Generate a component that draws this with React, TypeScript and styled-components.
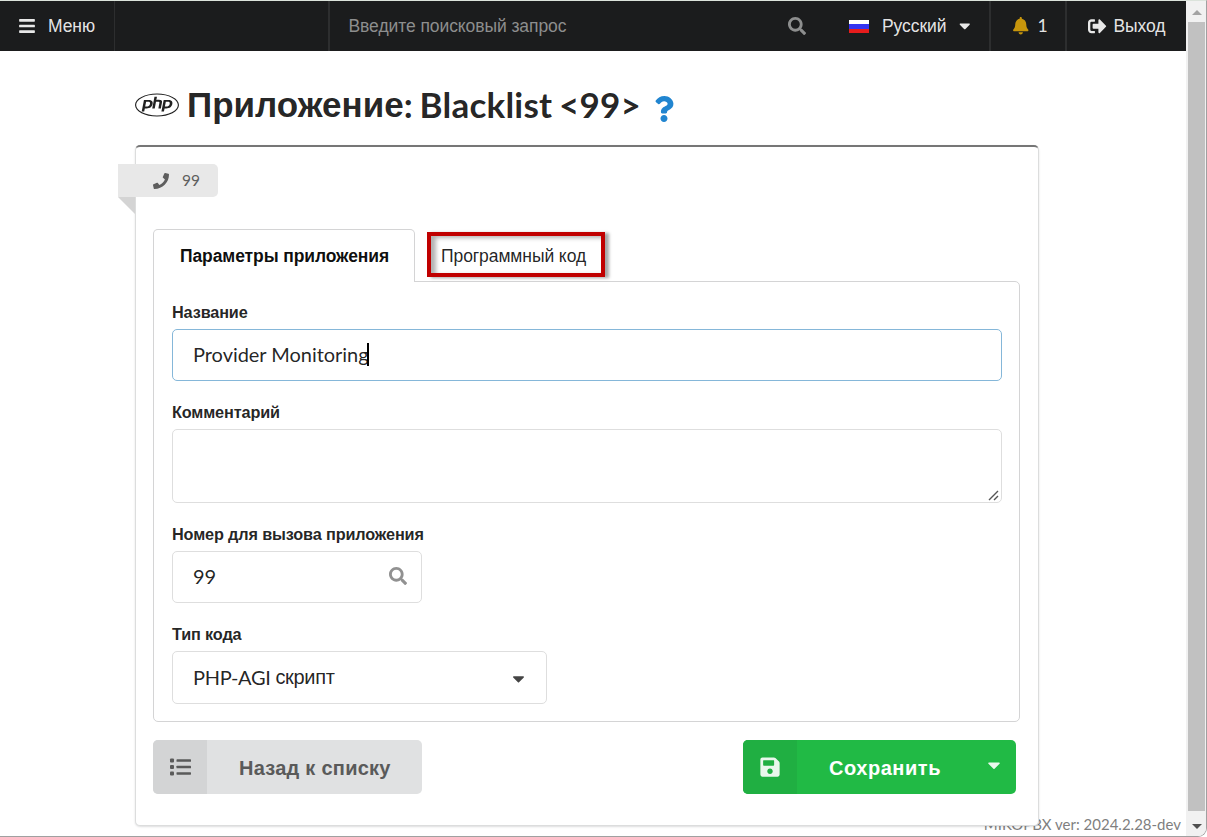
import React from 'react';
import styled, { createGlobalStyle } from 'styled-components';
import {
  FaBars, FaSearch, FaCaretDown, FaBell, FaSignOutAlt, FaPhp, FaQuestion, FaPhone, FaSave,
} from 'react-icons/fa';

const LATO = 'Lato, "Liberation Sans", sans-serif';
const ARIAL = '"Liberation Sans", Arial, sans-serif';

const GlobalStyle = createGlobalStyle`
  *, *::before, *::after { box-sizing: border-box; }
  body { margin: 0; background: #fff; overflow: hidden; }
  button, input, textarea { font: inherit; }
`;

const Window = styled.div`
  display: flex;
  width: 1207px;
  height: 837px;
  border: 1px solid #a0a0a0;
  border-top-color: #dbe3db;
  border-left: 0;
  border-radius: 0 0 9px 0;
  overflow: hidden;
  background: #fff;
  color: rgba(0, 0, 0, 0.87);
  font-family: ${ARIAL};
  font-size: 17.5px;
  line-height: 24px;
`;

const Page = styled.div`
  position: relative;
  display: flex;
  flex-direction: column;
  width: 1186px;
  flex: none;
`;

const Lat = styled.span<{ $spacing?: number }>`
  font-family: ${LATO};
  letter-spacing: ${(p) => p.$spacing ?? 0}px;
`;

const Cyr = styled.span<{ $spacing?: number }>`
  font-family: ${ARIAL};
  letter-spacing: ${(p) => p.$spacing ?? 0}px;
`;

const TopBar = styled.header`
  display: flex;
  height: 50px;
  flex: none;
  background: #1b1c1d;
  color: rgba(255, 255, 255, 0.9);
  letter-spacing: -0.08px;
`;

const BarItem = styled.div<{ $w: number; $pad: number; $gap?: number; $line?: number }>`
  display: flex;
  align-items: center;
  width: ${(p) => p.$w}px;
  padding-left: ${(p) => p.$pad}px;
  gap: ${(p) => p.$gap ?? 0}px;
  border-right: ${(p) => p.$line ?? 0}px solid #2d2e2f;
  white-space: nowrap;
  svg { flex: none; }
`;

const LanguageItem = styled(BarItem)`
  > svg { margin-left: 10px; }
`;

const SearchBox = styled(BarItem)`
  justify-content: space-between;
  padding-right: 23px;
  color: #8d8e8e;
`;

const Flag = styled.span`
  width: 20px;
  height: 13px;
  margin-right: 13px;
  background: linear-gradient(#fff 0 4px, #3434f0 4px 9px, #e61c1c 9px);
`;

const Content = styled.main`
  display: flex;
  flex-direction: column;
  width: 904px;
  margin-left: 135px;
`;

const Title = styled.h1`
  display: flex;
  align-items: center;
  height: 44px;
  margin: 31px 0 19px;
  font-family: ${LATO};
  font-size: 35px;
  font-weight: 700;
  line-height: 44px;
  white-space: pre;
  .php { margin: 2px 8px 0 0; }
  .help { margin: 10px 0 0 10px; color: #2185d0; }
  ${Cyr} { padding-top: 2px; }
  ${Lat} { word-spacing: -2px; }
`;

const Card = styled.section`
  position: relative;
  z-index: 1;
  height: 681px;
  padding: 17px 17px 0;
  background: #fff;
  border: 1px solid #dcdddd;
  border-top: 2px solid #767676;
  border-radius: 5px;
  box-shadow: 0 1px 2px rgba(34, 36, 38, 0.15);
`;

const Ribbon = styled.div`
  position: relative;
  display: flex;
  align-items: center;
  gap: 13px;
  width: 100px;
  height: 33px;
  margin-left: -35px;
  padding: 0 0 2px 35px;
  background: #e8e8e8;
  border-radius: 0 5px 5px 0;
  color: #5e5e5e;
  font-family: ${LATO};
  font-size: 15.5px;
  svg { margin-top: 2px; }
  &::after {
    content: '';
    position: absolute;
    left: 0;
    top: 100%;
    border-style: solid;
    border-width: 0 17px 17px 0;
    border-color: transparent #d4d4d4 transparent transparent;
  }
`;

const Tabs = styled.nav`
  display: flex;
  align-items: flex-start;
  height: 52px;
  margin-top: 32px;
`;

const ActiveTab = styled.div`
  position: relative;
  z-index: 1;
  width: 262px;
  height: 53px;
  padding: 14px 0 0 26px;
  background: #fff;
  border: 1px solid #d4d4d5;
  border-bottom: 0;
  border-radius: 5px 5px 0 0;
  color: rgba(0, 0, 0, 0.95);
  font-weight: 700;
  letter-spacing: -0.1px;
  white-space: nowrap;
`;

const MarkedTab = styled.div`
  width: 178px;
  height: 45px;
  margin: 3px 0 0 12px;
  padding: 8px 0 0 10px;
  border: 4px solid #c00000;
  box-shadow: 4px 1px 3px rgba(0, 0, 0, 0.35), inset 5px 2px 4px rgba(0, 0, 0, 0.3);
  letter-spacing: -0.08px;
  white-space: nowrap;
`;

const Panel = styled.form`
  width: 867px;
  height: 441px;
  padding: 18px 17px 0 18px;
  border: 1px solid #d4d4d5;
  border-radius: 0 5px 5px 5px;
`;

const Label = styled.label`
  display: block;
  height: 25px;
  margin-bottom: 4px;
  font-size: 16.25px;
  font-weight: 700;
  letter-spacing: -0.14px;
  line-height: 25px;
`;

const Field = styled.div<{ $w: number; $h: number; $after: number; $focus?: boolean; $end?: number }>`
  position: relative;
  display: flex;
  align-items: center;
  width: ${(p) => p.$w}px;
  height: ${(p) => p.$h}px;
  margin-bottom: ${(p) => p.$after}px;
  padding: 0 ${(p) => p.$end ?? 14}px 2px 20px;
  border: 1px solid ${(p) => (p.$focus ? '#85b7d9' : '#dedede')};
  border-radius: 5px;
  font-size: 20px;
  white-space: pre;
  > svg { margin-left: auto; }
`;

const Caret = styled.i`
  width: 2px;
  height: 23px;
  margin-left: -2px;
  background: #000;
`;

const Grip = styled.svg`
  position: absolute;
  right: 2px;
  bottom: 1px;
`;

const SelectArrow = styled(FaCaretDown)`
  margin-top: 4px;
`;

const Actions = styled.div`
  display: flex;
  justify-content: space-between;
  width: 863px;
  margin-top: 18px;
`;

const Button = styled.button<{ $w: number; $bg: string; $side: string; $fg: string; $spacing: number }>`
  display: flex;
  width: ${(p) => p.$w}px;
  height: 54px;
  padding: 0;
  border: 0;
  border-radius: 5px;
  overflow: hidden;
  background: ${(p) => p.$bg};
  color: ${(p) => p.$fg};
  font-size: 20px;
  font-weight: 700;
  letter-spacing: ${(p) => p.$spacing}px;
  line-height: 54px;
  white-space: nowrap;
  .side {
    display: flex;
    align-items: center;
    justify-content: center;
    width: 54px;
    height: 54px;
    background: ${(p) => p.$side};
  }
  .text { margin: 1px 0 0 32px; }
  .arrow { margin: 15px 0 0 43px; }
`;

const Version = styled.footer`
  position: absolute;
  right: 5px;
  bottom: 1px;
  color: #7f7f7f;
  font-family: ${LATO};
  font-size: 15px;
  line-height: 22px;
`;

const Scrollbar = styled.aside`
  display: flex;
  flex-direction: column;
  align-items: center;
  justify-content: space-between;
  width: 20px;
  padding: 9px 1px 7px 2px;
  background: #f1f1f1;
`;

const Thumb = styled.div`
  width: 17px;
  height: 789px;
  margin-bottom: 7px;
  background: #c1c1c1;
`;

const ListIcon = () => (
  <svg width="22" height="18" viewBox="0 0 22 18" fill="currentColor">
    {[0.6, 7, 13.4].map((y) => (
      <g key={y}>
        <rect x="1" y={y} width="4" height="4" rx="1" />
        <rect x="7.5" y={y + 0.75} width="14.5" height="2.5" rx="0.6" />
      </g>
    ))}
  </svg>
);

export default function App() {
  return (
    <>
      <GlobalStyle />
      <Window>
        <Page>
          <TopBar>
            <BarItem $w={115} $pad={17.5} $gap={12.5} $line={1}>
              <FaBars size={18} />
              <span>Меню</span>
            </BarItem>
            <BarItem $w={215} $pad={0} $line={2} />
            <SearchBox $w={499} $pad={18.5}>
              <span>Введите поисковый запрос</span>
              <FaSearch size={18} />
            </SearchBox>
            <LanguageItem $w={162} $pad={20} $line={2}>
              <Flag />
              <span>Русский</span>
              <FaCaretDown size={17.5} />
            </LanguageItem>
            <BarItem $w={76} $pad={21} $gap={8} $line={2}>
              <FaBell size={17.5} color="#c8960c" />
              <Lat>1</Lat>
            </BarItem>
            <BarItem $w={119} $pad={21} $gap={7}>
              <FaSignOutAlt size={18.5} />
              <span>Выход</span>
            </BarItem>
          </TopBar>
          <Content>
            <Title>
              <FaPhp className="php" size={44} />
              <Cyr>Приложение</Cyr>
              <Lat $spacing={0.2}>: Blacklist &lt;99&gt;</Lat>
              <FaQuestion className="help" size={26} />
            </Title>
            <Card>
              <Ribbon>
                <FaPhone size={16} />
                <span>99</span>
              </Ribbon>
              <Tabs>
                <ActiveTab>Параметры приложения</ActiveTab>
                <MarkedTab>Программный код</MarkedTab>
              </Tabs>
              <Panel>
                <Label>Название</Label>
                <Field $w={830} $h={52} $after={19} $focus>
                  <Lat $spacing={-0.04}>Provider Monitoring</Lat>
                  <Caret />
                </Field>
                <Label>Комментарий</Label>
                <Field $w={830} $h={74} $after={19}>
                  <Grip width="11" height="11" viewBox="0 0 11 11" stroke="#555" strokeWidth="1.4">
                    <path d="M1 10 10 1M6 10l4-4" />
                  </Grip>
                </Field>
                <Label>Номер для вызова приложения</Label>
                <Field $w={250} $h={52} $after={19}>
                  <Lat>99</Lat>
                  <FaSearch size={18} color="#919191" />
                </Field>
                <Label>Тип кода</Label>
                <Field $w={375} $h={53} $after={0} $end={18}>
                  <Lat $spacing={-0.3}>PHP-AGI </Lat>
                  <Cyr $spacing={-0.3}>скрипт</Cyr>
                  <SelectArrow size={19} color="#444" />
                </Field>
              </Panel>
              <Actions>
                <Button $w={269} $bg="#e0e1e2" $side="#d3d4d5" $fg="#5a5a5a" $spacing={0.25}>
                  <span className="side"><ListIcon /></span>
                  <span className="text">Назад к списку</span>
                </Button>
                <Button $w={273} $bg="#21ba45" $side="#20af42" $fg="#fff" $spacing={0.55}>
                  <span className="side"><FaSave size={22} opacity={0.9} /></span>
                  <span className="text">Сохранить</span>
                  <FaCaretDown className="arrow" size={20} opacity={0.9} />
                </Button>
              </Actions>
            </Card>
          </Content>
          <Version>MIKOPBX ver: 2024.2.28-dev</Version>
        </Page>
        <Scrollbar>
          <svg width="10" height="5"><path d="M0 5 5 0l5 5z" fill="#a3a3a3" /></svg>
          <Thumb />
          <svg width="10" height="5"><path d="M0 0 5 5l5-5z" fill="#505050" /></svg>
        </Scrollbar>
      </Window>
    </>
  );
}
